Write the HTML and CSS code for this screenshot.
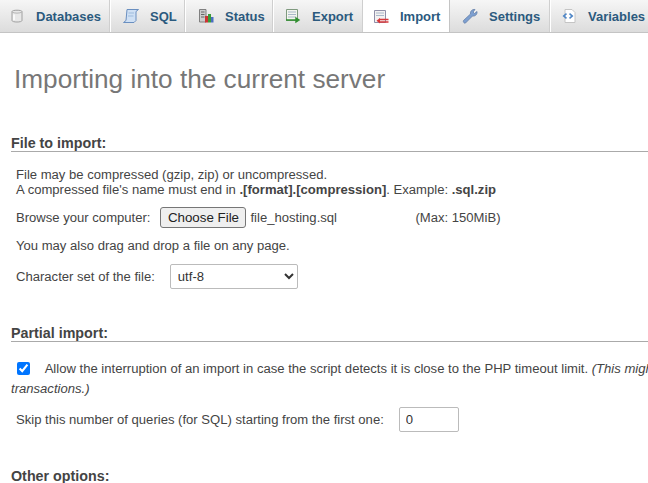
FILE: index.html
```html
<!DOCTYPE html>
<html>
	<head>
		<meta charset="utf-8" />
		<title>Import</title>
		<link rel="stylesheet" href="styles.css">
	</head>

	<body>
		<div class="tabs">
			<a class="tab tab-databases">
				<svg class="ico" viewBox="0 0 16 16"><path d="M3 3.500C3 1.800 13 1.800 13 3.500V12.500C13 14.500 3 14.500 3 12.500Z" fill="#e8e8e8" stroke="#a0a0a0"/><path d="M3 4C5 5.500 11 5.500 13 4" fill="none" stroke="#b5b5b5"/><path d="M5 6.500V12" stroke="#fff" stroke-width="1.500"/></svg>
				Databases
			</a>
			<a class="tab tab-sql">
				<svg class="ico" viewBox="0 0 16 16"><path d="M4 1.500H15.500L13 3.500V12.500L11 14.500H.5L3 12.500Z" fill="#cfe0f4" stroke="#6a8fc0"/><path d="M5.500 5H11M5 8H10.500" stroke="#9dbbdc"/></svg>
				SQL
			</a>
			<a class="tab tab-status">
				<svg class="ico" viewBox="0 0 16 16"><path d="M1.500 1.500H8V14H1.500Z" fill="#ccc" stroke="#808080"/><path d="M3 4H6.500M3 6.500H6.500M3 9H6.500" stroke="#666"/><rect x="7" y="8" width="3" height="6.500" fill="#c33"/><rect x="10" y="6" width="3" height="8.500" fill="#3a9a3a"/><rect x="13" y="9" width="2.500" height="5.500" fill="#4a6fc0"/></svg>
				Status
			</a>
			<a class="tab tab-export">
				<svg class="ico" viewBox="0 0 16 16"><path d="M1.500 1.500H12.500V12.500H1.500Z" fill="#f3f5ef" stroke="#7f9a7f"/><path d="M3 4H11M3 6.500H11M3 9H11" stroke="#a9b8c9"/><path d="M1 12H12M11 10L14 12L11 14Z" fill="#2f8f2f" stroke="#2f8f2f" stroke-width="1.400"/></svg>
				Export
			</a>
			<a class="tab tab-import active">
				<svg class="ico" viewBox="0 0 16 16"><path d="M1.500 1.500H12.500V13.500H1.500Z" fill="#f3f1f1" stroke="#8f8fa8"/><path d="M3 4H11M3 6.500H11" stroke="#a9b8c9"/><path d="M6 10.500H15.500M6 13H15.500" stroke="#d8373a" stroke-width="1.300"/><path d="M7 9L3.500 11.700L7 14.500Z" fill="#d8373a"/></svg>
				Import
			</a>
			<a class="tab tab-settings">
				<svg class="ico" viewBox="0 0 16 16"><path d="M1.500 12.500L8.500 6C8 3.500 10 1 13 1.500L11 4L12.500 5.500L15 3.500C15.500 6.500 13 8.500 10.500 8L3.500 15C2.500 15.800 .7 13.800 1.500 12.500Z" fill="#7d9fd0" stroke="#6480a8" stroke-width=".8"/></svg>
				Settings
			</a>
			<a class="tab tab-variables">
				<svg class="ico" viewBox="0 0 16 16"><path d="M4 1.500H11L14 4.500V14.500H4Z" fill="#fff" stroke="#c4c4c4"/><path d="M5 5L1.500 8L5 11L6 9.800L4 8L6 6.200ZM9 5L12.500 8L9 11L8 9.800L10 8L8 6.200Z" fill="#4f86c6"/></svg>
				Variables
			</a>
		</div>

		<div class="page">
			<h2 class="title">Importing into the current server</h2>

			<h3 class="heading heading-file">File to import:</h3>
			<div class="group">
				<p class="note">File may be compressed (gzip, zip) or uncompressed.<br>A compressed file's name must end in <b>.[format].[compression]</b>. Example: <b>.sql.zip</b></p>
				<div class="row row-browse">
					<span class="lbl">Browse your computer:</span>
					<button class="choose">Choose File</button>
					<span class="fname">file_hosting.sql</span>
					<span class="max">(Max: 150MiB)</span>
				</div>
				<p class="drag">You may also drag and drop a file on any page.</p>
				<div class="row row-charset">
					<span class="lbl">Character set of the file:</span>
					<select class="charset"><option>utf-8</option></select>
				</div>
			</div>

			<h3 class="heading heading-partial">Partial import:</h3>
			<div class="allow">
				<input type="checkbox" class="chk" checked>
				<span class="allow-text">Allow the interruption of an import in case the script detects it is close to the PHP timeout limit. <i>(This might be a good way to import large files, however it can break transactions.)</i></span>
			</div>
			<div class="group">
				<div class="row row-skip">
					<span class="lbl">Skip this number of queries (for SQL) starting from the first one:</span>
					<input type="text" class="skip" value="0">
				</div>
			</div>

			<h3 class="heading heading-other">Other options:</h3>
		</div>
	</body>
</html>
```

FILE: styles.css
```css
* {
	box-sizing: border-box;
}
html, body {
	margin: 0;
	padding: 0;
	height: 483px;
	overflow: hidden;
	background: #fff;
}
body {
	width: 648px;
	font-family: "Liberation Sans", Arial, sans-serif;
	font-size: 13.08px;
	color: #444;
}

/* top tabs */
.tabs {
	display: flex;
	height: 33px;
	width: 648px;
	overflow: hidden;
	background: linear-gradient(#f6f6f6, #dcdcdc);
	border-bottom: 1px solid #c4c4c4;
}
.tab {
	display: flex;
	flex: none;
	align-items: center;
	height: 32px;
	color: #2b5a7e;
	font-size: 13px;
	font-weight: bold;
	white-space: nowrap;
	border-right: 1px solid #cfcfcf;
	box-shadow: 1px 0 0 #fff;
}
.tab-databases { width: 110px; padding-left: 9px; }
.tab-sql { width: 75px; padding-left: 13px; }
.tab-status { width: 88px; padding-left: 13px; }
.tab-export { width: 90px; padding-left: 12px; }
.tab-import { width: 87px; padding-left: 10px; }
.tab-settings { width: 100px; padding-left: 12px; }
.tab-variables { width: 98px; padding-left: 11px; border-right: 0; }
.tab.active {
	height: 33px;
	background: #fff;
	border-right: 1px solid #c4c4c4;
	box-shadow: none;
}
.ico {
	flex: none;
	width: 16px;
	height: 16px;
	margin-right: 11px;
}

/* page */
.page {
	padding-left: 11px;
}
.title {
	margin: 33px 0 0 3px;
	font-size: 26.2px;
	line-height: 27px;
	font-weight: normal;
	color: #777;
}
.heading {
	margin: 0;
	font-size: 14.3px;
	line-height: 16px;
	height: 17px;
	font-weight: bold;
	color: #444;
	border-bottom: 1px solid #aaa;
}
.heading-file { margin-top: 42px; }
.heading-partial { margin-top: 36px; }
.heading-other { margin-top: 36px; border-bottom: 0; }
.group {
	padding-left: 5px;
}
.note {
	margin: 15px 0 0;
	line-height: 15px;
}
.row {
	display: flex;
	align-items: center;
}
.row-browse { margin-top: 8px; height: 24px; }
.lbl { flex: none; }
.choose {
	width: 86px;
	height: 21px;
	margin: 0 0 0 10px;
	padding: 0;
	font: 13.33px "Liberation Sans", Arial, sans-serif;
	color: #222;
	background: #efefef;
	border: 1px solid #767676;
	border-radius: 3px;
}
.fname { margin-left: 4px; width: 165px; }
.drag { margin: 9px 0 0; line-height: 16px; }
.row-charset { margin-top: 10px; height: 25px; }
.charset {
	width: 128px;
	height: 25px;
	margin-left: 15px;
	padding-left: 3px;
	font: 13.08px "Liberation Sans", Arial, sans-serif;
	color: #333;
	background: #fff;
	border: 1px solid #bbb;
	border-radius: 2px;
}
.allow {
	margin-top: 17px;
	line-height: 19.5px;
	width: 1020px;
}
.chk {
	width: 13px;
	height: 13px;
	margin: 0 0 0 6px;
	vertical-align: -2px;
	accent-color: #0075ff;
}
.allow-text { margin-left: 11px; }
.row-skip { margin-top: 9px; height: 25px; }
.skip {
	width: 60px;
	height: 25px;
	margin-left: 15px;
	padding: 0 6px;
	font: 13.08px "Liberation Sans", Arial, sans-serif;
	color: #333;
	border: 1px solid #bbb;
	border-radius: 2px;
}
```
